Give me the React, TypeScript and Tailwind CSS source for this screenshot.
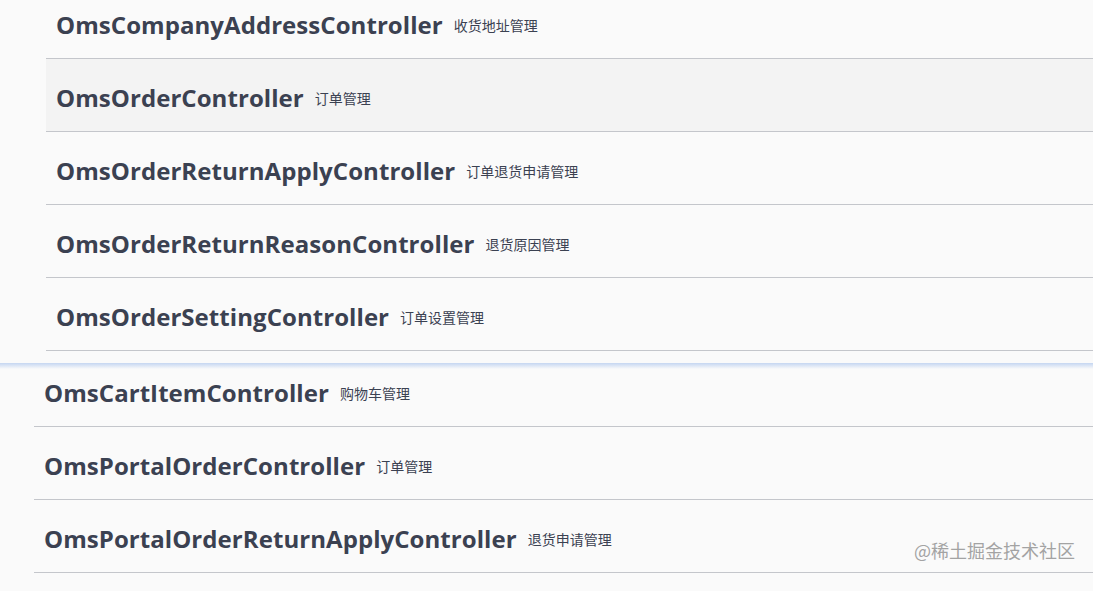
import React from 'react';

interface Tag {
  name: string;
  desc: string;
  hover?: boolean;
}

const adminTags: Tag[] = [
  { name: 'OmsCompanyAddressController', desc: '收货地址管理' },
  { name: 'OmsOrderController', desc: '订单管理', hover: true },
  { name: 'OmsOrderReturnApplyController', desc: '订单退货申请管理' },
  { name: 'OmsOrderReturnReasonController', desc: '退货原因管理' },
  { name: 'OmsOrderSettingController', desc: '订单设置管理' },
];

const portalTags: Tag[] = [
  { name: 'OmsCartItemController', desc: '购物车管理' },
  { name: 'OmsPortalOrderController', desc: '订单管理' },
  { name: 'OmsPortalOrderReturnApplyController', desc: '退货申请管理' },
];

const fontStack = { fontFamily: '"Open Sans", "Noto Sans CJK SC", sans-serif' };

function TagRow({ tag, className }: { tag: Tag; className?: string }) {
  return (
    <div
      className={`flex items-center border-b border-[#c4c6cb] pl-[10px] ${
        tag.hover ? 'bg-[#f3f3f3]' : ''
      } ${className ?? 'h-[73px] pt-[6px]'}`}
    >
      <span className="text-[24px] font-bold leading-none text-[#3b4151] tracking-[0.06px]">{tag.name}</span>
      <small className="ml-[11px] text-[14px] leading-none text-[#3b4151] font-['Noto_Sans_CJK_SC',sans-serif]">
        {tag.desc}
      </small>
    </div>
  );
}

export default function App() {
  return (
    <div className="relative flex h-[591px] w-full flex-col overflow-hidden bg-[#fafafa]" style={fontStack}>
      <div className="-mt-[14px] pl-[46px]">
        {adminTags.map((tag) => (
          <TagRow key={tag.name} tag={tag} />
        ))}
      </div>

      <div className="h-[12px]" />
      <div className="h-[6px] bg-linear-to-b from-[#c5d6f1] to-[#fafafa]" />

      <div className="pl-[34px]">
        {portalTags.map((tag, i) => (
          <TagRow key={tag.name} tag={tag} className={i === 0 ? 'h-[58px] pb-[9px]' : undefined} />
        ))}
      </div>

      <div className="absolute right-[18px] top-[541px] text-[18px] leading-none text-[#a3a3a3] font-['Noto_Sans_CJK_SC',sans-serif] [text-shadow:0_0_1px_#ffffff]">
        @稀土掘金技术社区
      </div>
    </div>
  );
}
